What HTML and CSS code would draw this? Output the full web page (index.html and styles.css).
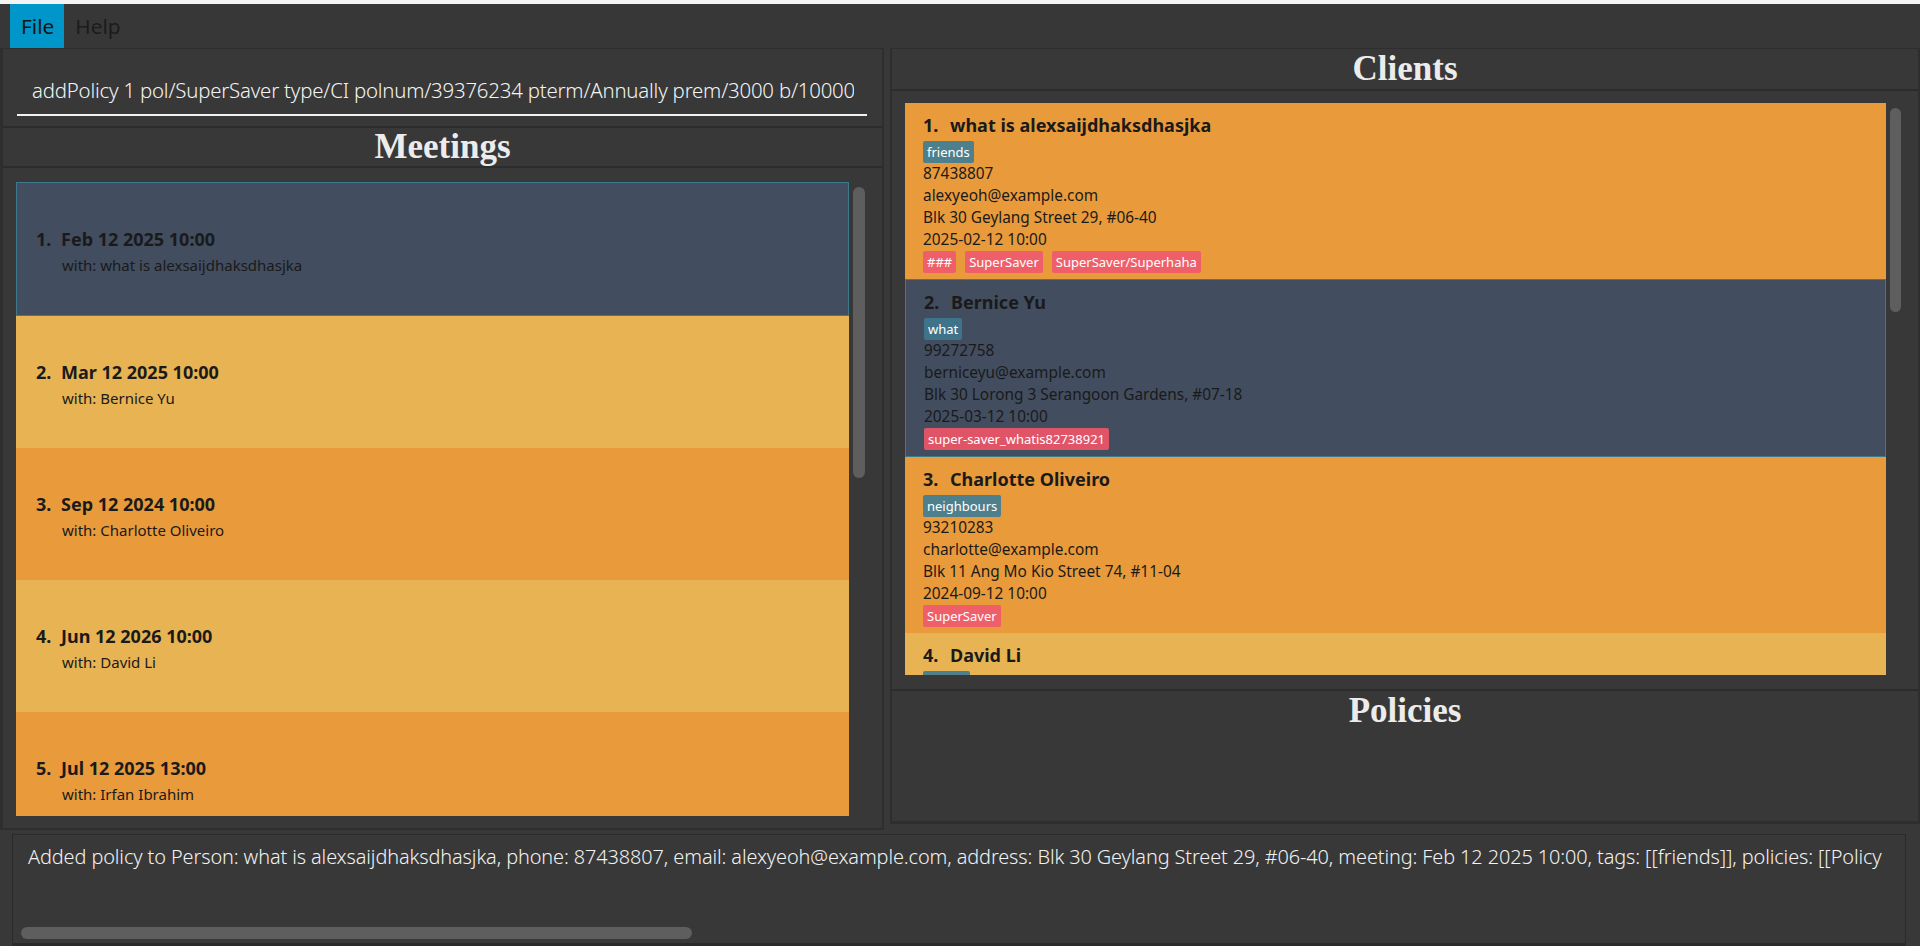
FILE: index.html
```html
<!DOCTYPE html>
<html>
<head>
<meta charset="utf-8">
<title>Insurance Address Book</title>
<link rel="stylesheet" href="styles.css">
</head>
<body>
<div class="topstrip"></div>
<div class="menubar">
  <span class="menu active">File</span>
  <span class="menu">Help</span>
</div>
<div class="main">
  <div class="leftcol">
    <div class="cmdbox">
      <div class="cmdfield"><div class="cmdclip"><span class="cmdtext">addPolicy 1 pol/SuperSaver type/CI polnum/39376234 pterm/Annually prem/3000 b/10000</span></div></div>
    </div>
    <div class="sechead">Meetings</div>
    <div class="listwrap mlist">
      <div class="viewport">
        <div class="cards">
          <div class="mcard selected">
            <div class="mtitle"><span class="idx">1.</span>Feb 12 2025 10:00</div>
            <div class="mwith">with: what is alexsaijdhaksdhasjka</div>
          </div>
          <div class="mcard light">
            <div class="mtitle"><span class="idx">2.</span>Mar 12 2025 10:00</div>
            <div class="mwith">with: Bernice Yu</div>
          </div>
          <div class="mcard orange">
            <div class="mtitle"><span class="idx">3.</span>Sep 12 2024 10:00</div>
            <div class="mwith">with: Charlotte Oliveiro</div>
          </div>
          <div class="mcard light">
            <div class="mtitle"><span class="idx">4.</span>Jun 12 2026 10:00</div>
            <div class="mwith">with: David Li</div>
          </div>
          <div class="mcard orange">
            <div class="mtitle"><span class="idx">5.</span>Jul 12 2025 13:00</div>
            <div class="mwith">with: Irfan Ibrahim</div>
          </div>
        </div>
        <div class="vscroll m"><div class="thumb"></div></div>
      </div>
    </div>
  </div>
  <div class="rightcol">
    <div class="sechead chead">Clients</div>
    <div class="listwrap clist">
      <div class="viewport">
        <div class="cards">
          <div class="ccard orange">
            <div class="cname"><span class="idx">1.</span>what is alexsaijdhaksdhasjka</div>
            <div class="tags"><span class="tag teal">friends</span></div>
            <div class="cline">87438807</div>
            <div class="cline">alexyeoh@example.com</div>
            <div class="cline">Blk 30 Geylang Street 29, #06-40</div>
            <div class="cline">2025-02-12 10:00</div>
            <div class="tags"><span class="tag red">###</span><span class="tag red">SuperSaver</span><span class="tag red">SuperSaver/Superhaha</span></div>
          </div>
          <div class="ccard selected">
            <div class="cname"><span class="idx">2.</span>Bernice Yu</div>
            <div class="tags"><span class="tag teal2">what</span></div>
            <div class="cline">99272758</div>
            <div class="cline">berniceyu@example.com</div>
            <div class="cline">Blk 30 Lorong 3 Serangoon Gardens, #07-18</div>
            <div class="cline">2025-03-12 10:00</div>
            <div class="tags"><span class="tag red2">super-saver_whatis82738921</span></div>
          </div>
          <div class="ccard orange">
            <div class="cname"><span class="idx">3.</span>Charlotte Oliveiro</div>
            <div class="tags"><span class="tag teal">neighbours</span></div>
            <div class="cline">93210283</div>
            <div class="cline">charlotte@example.com</div>
            <div class="cline">Blk 11 Ang Mo Kio Street 74, #11-04</div>
            <div class="cline">2024-09-12 10:00</div>
            <div class="tags"><span class="tag red">SuperSaver</span></div>
          </div>
          <div class="ccard light">
            <div class="cname"><span class="idx">4.</span>David Li</div>
            <div class="tags"><span class="tag teal stub"></span></div>
          </div>
        </div>
        <div class="vscroll c"><div class="thumb"></div></div>
      </div>
    </div>
    <div class="sechead phead">Policies</div>
    <div class="policies"></div>
  </div>
</div>
<div class="result">
  <div class="resultbox">
    <div class="resulttext">Added policy to Person: what is alexsaijdhaksdhasjka, phone: 87438807, email: alexyeoh@example.com, address: Blk 30 Geylang Street 29, #06-40, meeting: Feb 12 2025 10:00, tags: [[friends]], policies: [[Policy</div>
    <div class="hscroll"><div class="hthumb"></div></div>
  </div>
</div>
</body>
</html>
```
FILE: styles.css
```css
* { box-sizing: border-box; }
html, body {
  margin: 0;
  padding: 0;
  width: 1920px;
  height: 946px;
  overflow: hidden;
  background: #383838;
  font-family: "Noto Sans", "Open Sans", sans-serif;
}
.topstrip {
  height: 4px;
  background: #f4f4f4;
}
.menubar {
  height: 44px;
  background: #373737;
  display: flex;
  align-items: stretch;
  padding-left: 10px;
}
.menu {
  display: flex;
  align-items: center;
  padding: 0 11px;
  font-size: 20.8px;
  color: #1c1c1c;
  line-height: 1;
}
.menu.active {
  background: #0096c9;
  color: #141414;
  padding: 0 10px 0 11px;
}
.main {
  display: flex;
  height: 782px;
  gap: 6px;
}
.leftcol {
  width: 884px;
  display: flex;
  flex-direction: column;
  border: 2px solid #2e2e2e;
  border-left-width: 3px;
  border-top-width: 1px;
}
.rightcol {
  flex: 1;
  display: flex;
  flex-direction: column;
  border: 2px solid #2e2e2e;
  border-top-width: 1px;
  border-bottom-width: 3px;
  height: 776px;
}
.cmdbox {
  height: 79px;
  border-bottom: 2px solid #2c2c2c;
  padding: 20px 12px 0 14px;
}
.cmdfield {
  width: 850px;
  height: 47px;
  border-bottom: 2px solid #f2f2f2;
  padding-left: 15px;
}
.cmdclip {
  width: 822px;
  overflow: hidden;
  white-space: nowrap;
}
.cmdtext {
  font-size: 20.4px;
  font-weight: 300;
  color: #f4f4f4;
  line-height: 42px;
  letter-spacing: -0.2px;
}
.sechead {
  height: 40px;
  display: flex;
  align-items: center;
  justify-content: center;
  font-family: "Liberation Serif", "Times New Roman", serif;
  font-weight: bold;
  font-size: 35px;
  color: #ececec;
  border-bottom: 2px solid #2c2c2c;
}
.chead {
  height: 42px;
}
.phead {
  border-bottom: none;
  border-top: 2px solid #2c2c2c;
  height: 42px;
}
.listwrap {
  flex: 1;
  min-height: 0;
  display: flex;
}
.mlist {
  padding: 14px 15px 12px 13px;
}
.clist {
  flex: 0 0 598px;
  padding: 12px 14px 14px 13px;
}
.viewport {
  flex: 1;
  display: flex;
  overflow: hidden;
}
.cards {
  flex: 1;
  overflow: hidden;
}
.vscroll {
  flex: 0 0 auto;
  position: relative;
}
.vscroll.m { width: 18px; padding: 5px 2px 0 4px; }
.vscroll.c { width: 18px; padding: 5px 3px 0 4px; }
.thumb {
  background: #5e5e5e;
  border-radius: 6px;
  width: 12px;
}
.vscroll.m .thumb { height: 291px; }
.vscroll.c .thumb { height: 204px; width: 11px; }

.mcard {
  height: 132px;
  display: flex;
  flex-direction: column;
  justify-content: center;
  padding: 3px 0 0 20px;
  color: #1a1a1a;
}
.mcard.selected {
  height: 134px;
  padding-left: 19px;
}
.orange { background: #e99a3b; }
.light { background: #e8b352; }
.selected {
  background: #424d5f;
  border: 1px solid #3d7a8e;
}
.mtitle {
  font-size: 18px;
  font-weight: 700;
  line-height: 26px;
  display: flex;
}
.idx {
  display: inline-block;
  width: 25px;
}
.mwith {
  font-size: 15px;
  line-height: 22px;
  margin-left: 26px;
  margin-top: 2px;
}
.ccard {
  height: 176px;
  padding: 8px 0 0 18px;
  color: #1a1a1a;
}
.ccard.selected {
  height: 178px;
}
.cname {
  font-size: 18px;
  font-weight: 700;
  line-height: 28px;
  margin-bottom: 2px;
  display: flex;
}
.cname .idx { width: 27px; }
.tags {
  display: flex;
  gap: 9px;
  height: 22px;
}
.tag {
  font-size: 13px;
  line-height: 22px;
  height: 22px;
  padding: 0 4px;
  color: #ffffff;
  border-radius: 2px;
}
.tag.stub { width: 47px; }
.teal { background: #4e7f8d; }
.teal2 { background: #3f7389; }
.red { background: #ef5f6a; }
.red2 { background: #e05468; }
.cline {
  font-size: 15.4px;
  line-height: 22px;
}
.policies {
  flex: 1;
}
.result {
  height: 116px;
  padding: 4px 14px 0 12px;
}
.resultbox {
  height: 112px;
  border: 1px solid #2a2a2a;
  border-bottom-width: 3px;
  background: #383838;
  display: flex;
  flex-direction: column;
  overflow: hidden;
}
.resulttext {
  font-size: 19.9px;
  font-weight: 300;
  color: #f2f2f2;
  white-space: nowrap;
  padding: 7px 0 0 15px;
  line-height: 30px;
  height: 90px;
  letter-spacing: -0.1px;
}
.hscroll {
  padding: 2px 0 0 8px;
}
.hthumb {
  width: 671px;
  height: 12px;
  border-radius: 6px;
  background: #5e5e5e;
}
```
